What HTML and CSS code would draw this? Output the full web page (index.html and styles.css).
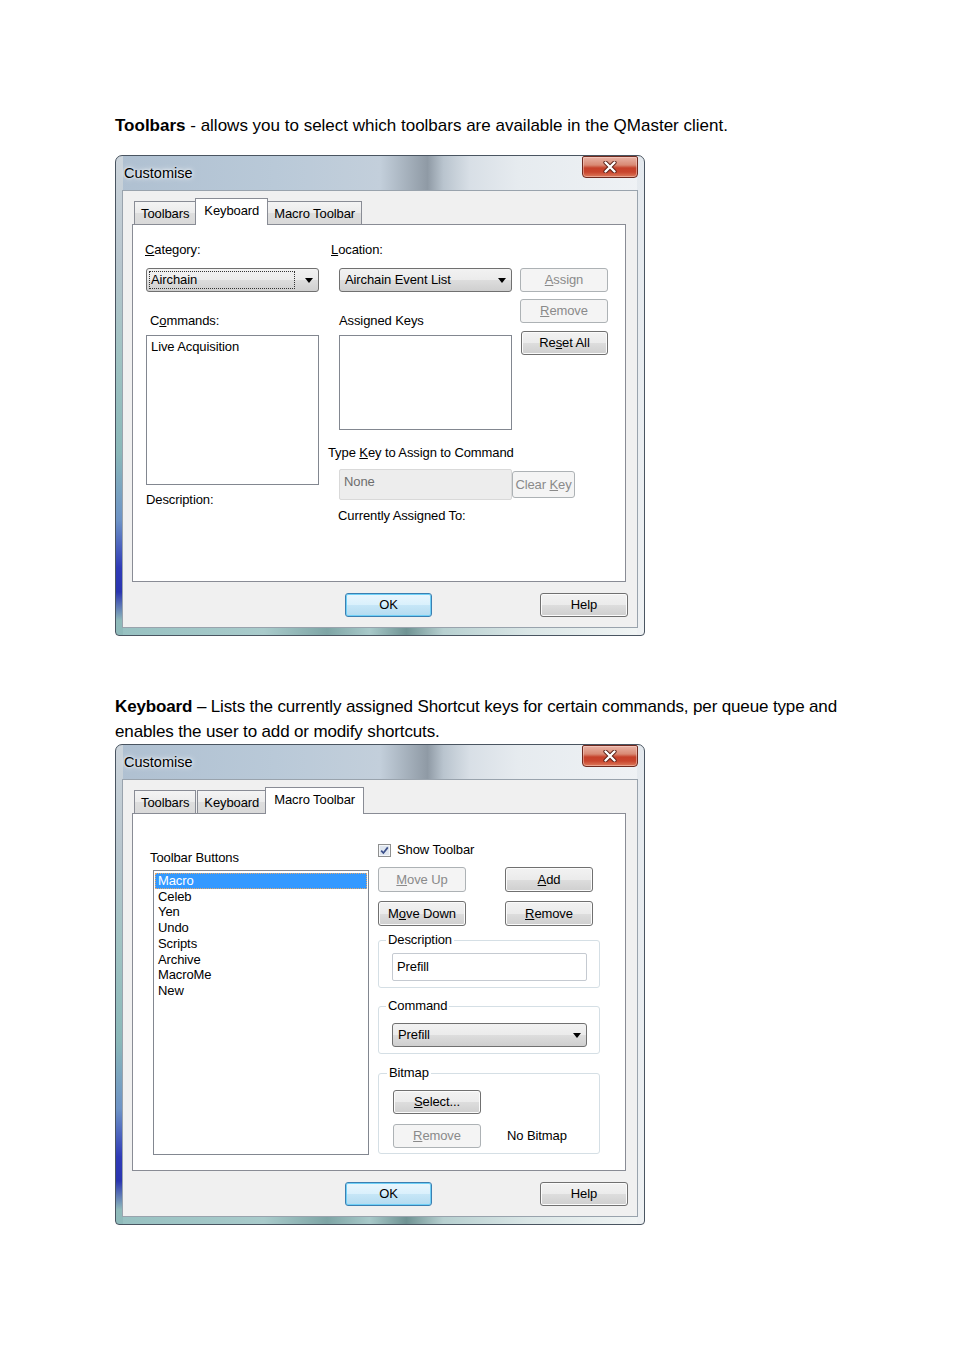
FILE: index.html
```html
<!DOCTYPE html>
<html lang="en">

<head>
  <meta charset="UTF-8">
  <title>Customise - Toolbars / Keyboard</title>
  <link rel="stylesheet" href="styles.css">
</head>

<body>
  <div class="page">
    <p class="lead lead-first"><b>Toolbars</b> - allows you to select which toolbars are available in the QMaster client.</p>

    <!-- dialog 1 : keyboard tab -->
    <div class="win">
      <div class="titlebar">
        <span class="title">Customise</span>
        <span class="close">
          <svg width="14" height="12" viewBox="0 0 14 12">
            <path d="M2.5 1.5 L11.5 10.5 M11.5 1.5 L2.5 10.5" stroke="#5a2016" stroke-width="4.2" stroke-linecap="round"/>
            <path d="M2.5 1.5 L11.5 10.5 M11.5 1.5 L2.5 10.5" stroke="#ffffff" stroke-width="2.4" stroke-linecap="round"/>
          </svg>
        </span>
      </div>
      <div class="client">
        <div class="tabs">
          <span class="tab">Toolbars</span>
          <span class="tab active">Keyboard</span>
          <span class="tab">Macro Toolbar</span>
        </div>
        <div class="panel keys">
          <div class="col col-a">
            <div class="lbl lbl-top lbl-cat"><u>C</u>ategory:</div>
            <div class="combo focus"><span class="combo-text">Airchain</span></div>
            <div class="lbl lbl-mid lbl-cmd">C<u>o</u>mmands:</div>
            <div class="list list-cmd"><div class="item">Live Acquisition</div></div>
            <div class="lbl lbl-desc">Description:</div>
          </div>
          <div class="col col-b">
            <div class="lbl lbl-top lbl-loc"><u>L</u>ocation:</div>
            <div class="combo"><span class="combo-text">Airchain Event List</span></div>
            <div class="lbl lbl-mid">Assigned Keys</div>
            <div class="list list-keys"></div>
            <div class="lbl lbl-type">Type <u>K</u>ey to Assign to Command</div>
            <div class="key-row">
              <div class="textbox disabled">None</div>
              <button class="btn disabled btn-clear">Clear <u>K</u>ey</button>
            </div>
            <div class="lbl lbl-assigned">Currently Assigned To:</div>
          </div>
          <div class="col col-c">
            <button class="btn disabled"><u>A</u>ssign</button>
            <button class="btn disabled btn-gap1"><u>R</u>emove</button>
            <button class="btn btn-gap2">Re<u>s</u>et All</button>
          </div>
        </div>
        <div class="actions">
          <button class="btn default">OK</button>
          <button class="btn">Help</button>
        </div>
      </div>
    </div>

    <p class="lead lead-second"><b>Keyboard</b> – Lists the currently assigned Shortcut keys for certain commands, per queue type and<br>enables the user to add or modify shortcuts.</p>

    <!-- dialog 2 : macro toolbar tab -->
    <div class="win">
      <div class="titlebar">
        <span class="title">Customise</span>
        <span class="close">
          <svg width="14" height="12" viewBox="0 0 14 12">
            <path d="M2.5 1.5 L11.5 10.5 M11.5 1.5 L2.5 10.5" stroke="#5a2016" stroke-width="4.2" stroke-linecap="round"/>
            <path d="M2.5 1.5 L11.5 10.5 M11.5 1.5 L2.5 10.5" stroke="#ffffff" stroke-width="2.4" stroke-linecap="round"/>
          </svg>
        </span>
      </div>
      <div class="client">
        <div class="tabs">
          <span class="tab">Toolbars</span>
          <span class="tab">Keyboard</span>
          <span class="tab active">Macro Toolbar</span>
        </div>
        <div class="panel macro">
          <div class="col col-list">
            <div class="lbl lbl-buttons">Toolbar Buttons</div>
            <div class="list list-macro">
              <div class="item selected">Macro</div>
              <div class="item">Celeb</div>
              <div class="item">Yen</div>
              <div class="item">Undo</div>
              <div class="item">Scripts</div>
              <div class="item">Archive</div>
              <div class="item">MacroMe</div>
              <div class="item">New</div>
            </div>
          </div>
          <div class="col col-props">
            <label class="check">
              <span class="check-box">
                <svg width="13" height="13" viewBox="0 0 13 13">
                  <rect x="0.5" y="0.5" width="12" height="12" fill="#f4f6f9" stroke="#8e8f8f"/>
                  <rect x="2" y="2" width="9" height="9" fill="#dfe6ef"/>
                  <path d="M3.2 6.6 L5.4 9 L9.8 3.4" fill="none" stroke="#3b4f8a" stroke-width="1.7"/>
                </svg>
              </span>
              Show Toolbar
            </label>
            <div class="btn-row">
              <button class="btn disabled"><u>M</u>ove Up</button>
              <button class="btn"><u>A</u>dd</button>
            </div>
            <div class="btn-row btn-row-2">
              <button class="btn">M<u>o</u>ve Down</button>
              <button class="btn"><u>R</u>emove</button>
            </div>
            <fieldset class="group group-desc">
              <legend>Description</legend>
              <div class="textbox">Prefill</div>
            </fieldset>
            <fieldset class="group group-cmd">
              <legend>Command</legend>
              <div class="combo"><span class="combo-text">Prefill</span></div>
            </fieldset>
            <fieldset class="group group-bmp">
              <legend>Bitmap</legend>
              <button class="btn"><u>S</u>elect...</button>
              <div class="bmp-row">
                <button class="btn disabled"><u>R</u>emove</button>
                <span class="bmp-note">No Bitmap</span>
              </div>
            </fieldset>
          </div>
        </div>
        <div class="actions">
          <button class="btn default">OK</button>
          <button class="btn">Help</button>
        </div>
      </div>
    </div>
  </div>
</body>

</html>
```

FILE: styles.css
```css
/* reset start */
* {
  box-sizing: border-box;
}

body {
  margin: 0;
  background: #ffffff;
  color: #000000;
}

/* reset end */

.page {
  padding: 113px 0 0 115px;
}

/* prose start */
.lead {
  margin: 0;
  font: 17px/25px "Liberation Sans", Arial, sans-serif;
  white-space: nowrap;
}

.lead-first {
  margin-bottom: 17px;
}

.lead-second {
  margin-top: 58px;
  letter-spacing: -0.14px;
}

/* prose end */

/* window frame start */
.win {
  width: 530px;
  height: 481px;
  display: flex;
  flex-direction: column;
  padding: 0 6px 7px 6px;
  border: 1px solid #4a5561;
  border-radius: 7px 7px 4px 4px;
  font: 13px/16px "Liberation Sans", Arial, sans-serif;
  letter-spacing: -0.1px;
  white-space: normal;
  background:
    linear-gradient(180deg, #cdd5dc 0%, #b8c6ce 22%, #a0c3c3 42%, #8ab8b9 62%, #6d93c6 76%, #2f3bb7 86%, #2a35b0 91%, #8fbaba 97%) left top / 7px 100% no-repeat,
    linear-gradient(180deg, #e4e9ee, #eef1f3) right top / 7px 100% no-repeat,
    linear-gradient(90deg, #97c1c1 0%, #a9cbcb 28%, #7ea5a5 40%, #a8c9c9 48%, #6f9393 55%, #b7d0d0 62%, #dae6e6 78%, #f2f5f5 100%) left bottom / 100% 8px no-repeat,
    linear-gradient(90deg, #afc0d1 0%, #b9c9d8 30%, #c3cfdb 50%, #8f9aa5 59%, #b9c4ce 62%, #d8dfe6 67%, #e6ebef 76%, #eff2f5 100%);
}

.titlebar {
  height: 34px;
  display: flex;
  justify-content: space-between;
  padding-left: 2px;
}

.title {
  align-self: center;
  margin-top: -1px;
  font-size: 14.5px;
  letter-spacing: 0;
  text-shadow: 0 0 6px #ffffff, 0 0 3px #ffffff;
}

.close {
  width: 56px;
  height: 22px;
  display: flex;
  align-items: center;
  justify-content: center;
  border: 1px solid #6e2a1f;
  border-radius: 2px 2px 4px 4px;
  background: linear-gradient(180deg, #e8b3a6 0%, #d98a74 40%, #c5412a 55%, #c9452d 75%, #dc7b5c 100%);
  box-shadow: inset 0 0 0 1px rgba(255, 220, 210, 0.45);
}

.client {
  flex: 1;
  padding: 7px 11px 0 9px;
  border: 1px solid #99a3ad;
  background: #f0f0f0;
}

/* window frame end */

/* tabs start */
.tabs {
  height: 26px;
  margin-left: 2px;
  display: flex;
  align-items: flex-end;
}

.tab {
  position: relative;
  height: 23px;
  padding: 0 6px;
  border: 1px solid #898c95;
  border-bottom: none;
  line-height: 23px;
  white-space: nowrap;
  background: linear-gradient(180deg, #f4f4f4 0%, #ebebeb 50%, #dedede 51%, #d9d9d9 100%);
}

.tab + .tab {
  margin-left: 1px;
}

.tab.active {
  z-index: 1;
  height: 27px;
  margin: 0 -2px -1px -1px;
  padding: 0 8px;
  line-height: 24px;
  background: #ffffff;
}

.panel {
  height: 358px;
  display: flex;
  border: 1px solid #898c95;
  background: #ffffff;
}

/* tabs end */

/* controls start */
.lbl {
  white-space: nowrap;
}

.btn {
  width: 88px;
  height: 24px;
  padding: 0;
  border: 1px solid #707070;
  border-radius: 3px;
  font: 13px/16px "Liberation Sans", Arial, sans-serif;
  letter-spacing: -0.1px;
  color: #000000;
  background: linear-gradient(180deg, #f2f2f2 0%, #ebebeb 50%, #dddddd 51%, #cfcfcf 100%);
  box-shadow: inset 0 0 0 1px #fbfbfb;
}

.btn.disabled {
  border-color: #adb2b5;
  background: #f4f4f4;
  color: #8a8a8a;
  box-shadow: none;
}

.btn.default {
  border-color: #3c7fb1;
  background: linear-gradient(180deg, #eaf6fd 0%, #d9f0fc 50%, #c6e6f7 51%, #b4dbf0 100%);
  box-shadow: inset 0 0 0 1px #6fd0f7;
}

.combo {
  height: 24px;
  display: flex;
  align-items: center;
  padding: 0 5px 0 4px;
  border: 1px solid #707070;
  border-radius: 3px;
  background: linear-gradient(180deg, #f2f2f2 0%, #ebebeb 50%, #dddddd 51%, #cfcfcf 100%);
}

.combo::after {
  content: "";
  margin-left: auto;
  border-left: 4px solid transparent;
  border-right: 4px solid transparent;
  border-top: 5px solid #000000;
}

.combo-text {
  white-space: nowrap;
  padding-left: 1px;
}

.combo.focus {
  padding-left: 2px;
}

.combo.focus .combo-text {
  width: 148px;
  height: 18px;
  margin-right: 10px;
  line-height: 16px;
  border: 1px dotted #333333;
}

.list {
  border: 1px solid #828790;
  background: #ffffff;
}

.textbox {
  height: 28px;
  padding: 5px 4px;
  border: 1px solid #c5cad1;
  border-radius: 2px;
  background: #ffffff;
}

.textbox.disabled {
  border-color: #d9d9d9;
  background: #ededed;
  color: #6d6d6d;
  padding-top: 4px;
}

/* controls end */

/* keyboard panel start */
.keys {
  padding-left: 13px;
}

.col-a,
.col-b {
  width: 173px;
  display: flex;
  flex-direction: column;
}

.col-b {
  margin-left: 20px;
}

.col-c {
  width: 88px;
  margin-left: 8px;
  padding-top: 43px;
  display: flex;
  flex-direction: column;
}

.lbl-top {
  margin: 17px 0 10px;
}

.lbl-cat {
  margin-left: -1px;
}

.lbl-loc {
  margin-left: -8px;
}

.lbl-mid {
  margin: 21px 0 6px;
}

.lbl-cmd {
  margin-left: 4px;
}

.list-cmd {
  height: 150px;
  padding: 3px 4px;
}

.list-keys {
  height: 95px;
}

.lbl-desc {
  margin-top: 7px;
}

.lbl-type {
  margin: 15px 0 0 -11px;
}

.key-row {
  margin-top: 8px;
  display: flex;
  align-items: center;
}

.key-row .textbox {
  width: 173px;
  height: 31px;
  flex: none;
}

.btn-clear {
  width: 63px;
  height: 27px;
  flex: none;
}

.lbl-assigned {
  margin: 8px 0 0 -1px;
}

.btn-gap1 {
  margin-top: 7px;
}

.btn-gap2 {
  margin-top: 8px;
  margin-left: 1px;
  width: 87px;
}

/* keyboard panel end */

/* macro panel start */
.macro {
  padding-left: 20px;
}

.col-list {
  width: 216px;
  display: flex;
  flex-direction: column;
}

.lbl-buttons {
  margin: 36px 0 4px -3px;
}

.list-macro {
  height: 285px;
  padding: 2px 1px;
  line-height: 15.7px;
}

.list-macro .item {
  padding-left: 3px;
}

.list-macro .item.selected {
  background: #3399ff;
  color: #ffffff;
  outline: 1px dotted #e6a86a;
  outline-offset: -1px;
}

.col-props {
  width: 222px;
  margin-left: 9px;
  display: flex;
  flex-direction: column;
}

.check {
  height: 16px;
  margin-top: 28px;
  display: flex;
  align-items: center;
  gap: 6px;
}

.check-box {
  display: flex;
}

.btn-row {
  margin-top: 9px;
  display: flex;
  gap: 39px;
}

.btn-row .btn {
  height: 25px;
}

.btn-row-2 {
  margin-top: 9px;
}

.group {
  min-width: 0;
  margin: 6px 0 0;
  padding: 5px 12px 6px 13px;
  border: 1px solid #d5dfe5;
  border-radius: 3px;
}

.group legend {
  margin-left: -6px;
  padding: 0 2px;
  line-height: 16px;
}

.group-desc .textbox {
  height: 28px;
}

.group-cmd {
  margin-top: 10px;
  padding-top: 9px;
}

.group-bmp {
  margin-top: 11px;
  padding: 9px 12px 5px 14px;
}

.bmp-row {
  margin-top: 10px;
  display: flex;
  align-items: center;
}

.bmp-note {
  margin-left: 26px;
}

/* macro panel end */

/* bottom buttons start */
.actions {
  margin: 11px -2px 0 0;
  display: flex;
  justify-content: flex-end;
  gap: 108px;
}

.actions .default {
  width: 87px;
}

/* bottom buttons end */
```
